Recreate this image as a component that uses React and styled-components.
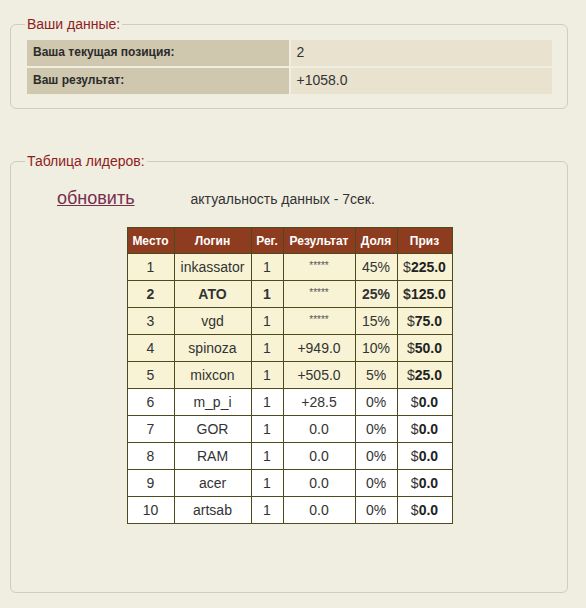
import React from "react";
import styled, { createGlobalStyle } from "styled-components";

const leaders = [
  { place: 1, login: "inkassator", reg: 1, result: "*****", share: "45%", prize: "225.0" },
  { place: 2, login: "ATO", reg: 1, result: "*****", share: "25%", prize: "125.0", me: true },
  { place: 3, login: "vgd", reg: 1, result: "*****", share: "15%", prize: "75.0" },
  { place: 4, login: "spinoza", reg: 1, result: "+949.0", share: "10%", prize: "50.0" },
  { place: 5, login: "mixcon", reg: 1, result: "+505.0", share: "5%", prize: "25.0" },
  { place: 6, login: "m_p_i", reg: 1, result: "+28.5", share: "0%", prize: "0.0" },
  { place: 7, login: "GOR", reg: 1, result: "0.0", share: "0%", prize: "0.0" },
  { place: 8, login: "RAM", reg: 1, result: "0.0", share: "0%", prize: "0.0" },
  { place: 9, login: "acer", reg: 1, result: "0.0", share: "0%", prize: "0.0" },
  { place: 10, login: "artsab", reg: 1, result: "0.0", share: "0%", prize: "0.0" },
];

const columns = [
  { title: "Место", width: 47 },
  { title: "Логин", width: 77 },
  { title: "Рег.", width: 32 },
  { title: "Результат", width: 72 },
  { title: "Доля", width: 42 },
  { title: "Приз", width: 55 },
];

const App = () => {
  return (
    <>
      <GlobalStyle />
      <Page>
        <Fieldset>
          <Legend>Ваши данные:</Legend>
          <InfoGrid>
            <InfoLabel>Ваша текущая позиция:</InfoLabel>
            <InfoValue>2</InfoValue>
            <InfoLabel>Ваш результат:</InfoLabel>
            <InfoValue>+1058.0</InfoValue>
          </InfoGrid>
        </Fieldset>

        <Fieldset $tall>
          <Legend>Таблица лидеров:</Legend>
          <Toolbar>
            <RefreshLink href="#">обновить</RefreshLink>
            <Freshness>актуальность данных - 7сек.</Freshness>
          </Toolbar>
          <Leaders>
            <thead>
              <tr>
                {columns.map((c) => (
                  <Th key={c.title} $w={c.width}>
                    {c.title}
                  </Th>
                ))}
              </tr>
            </thead>
            <tbody>
              {leaders.map((r) => (
                <Row key={r.place} $paid={r.place <= 5} $me={r.me}>
                  <Td>{r.place}</Td>
                  <Td>{r.login}</Td>
                  <Td>{r.reg}</Td>
                  <Td>{r.result === "*****" ? <Hidden>*****</Hidden> : r.result}</Td>
                  <Td>{r.share}</Td>
                  <Td>
                    ${""}
                    <Prize>{r.prize}</Prize>
                  </Td>
                </Row>
              ))}
            </tbody>
          </Leaders>
        </Fieldset>
      </Page>
    </>
  );
};

export default App;

const GlobalStyle = createGlobalStyle`
  body {
    margin: 0;
    background: #f0ede1;
    font-family: "Liberation Sans", Arial, sans-serif;
    color: #333;
  }
`;

const Page = styled.div`
  padding: 16px 0 0 10px;
  width: 558px;
`;

const Fieldset = styled.fieldset`
  margin: 0 0 ${({ $tall }) => ($tall ? "0" : "44px")};
  padding: ${({ $tall }) => ($tall ? "1px 15px 68px 16px" : "8px 15px 14px 16px")};
  border: 1px solid #cfccc2;
  border-radius: 6px;
  min-width: 0;
`;

const Legend = styled.legend`
  padding: 0 2px;
  margin-left: -2px;
  font-size: 14px;
  line-height: 16px;
  color: #8f1d1d;
`;

const InfoGrid = styled.div`
  display: grid;
  grid-template-columns: 1fr 1fr;
  gap: 2px;
`;

const InfoLabel = styled.div`
  height: 26px;
  padding: 4px 6px 0;
  box-sizing: border-box;
  background: #cfc7ae;
  font-size: 12px;
  font-weight: bold;
  line-height: 16px;
  color: #2b2b2b;
`;

const InfoValue = styled.div`
  height: 26px;
  padding: 4px 6px 0;
  box-sizing: border-box;
  background: #e8e2cf;
  font-size: 14px;
  line-height: 17px;
  color: #333;
`;

const Toolbar = styled.div`
  display: flex;
  align-items: baseline;
  gap: 56px;
  padding: 18px 0 0 30px;
`;

const RefreshLink = styled.a`
  font-size: 18px;
  line-height: 20px;
  color: #76304d;
  text-decoration: underline;
`;

const Freshness = styled.span`
  font-size: 14px;
  color: #333;
`;

const Leaders = styled.table`
  margin: 19px auto 0;
  border-collapse: collapse;
  border: 1px solid #4e4a20;
`;

const Th = styled.th`
  width: ${({ $w }) => $w}px;
  height: 26px;
  padding: 0;
  box-sizing: border-box;
  background: #8e3c1f;
  color: #fff;
  font-size: 12px;
  font-weight: bold;
  border: 1px solid #4e4a20;
`;

const Row = styled.tr`
  background: ${({ $paid }) => ($paid ? "#f7f3d4" : "#fff")};
  font-weight: ${({ $me }) => ($me ? "bold" : "normal")};
`;

const Td = styled.td`
  height: 26px;
  padding: 0;
  text-align: center;
  font-size: 14px;
  color: #333;
  border: 1px solid #4e4a20;
`;

const Hidden = styled.span`
  font-size: 10px;
  font-weight: normal;
  color: #555;
  vertical-align: 3px;
`;

const Prize = styled.b`
  color: #222;
`;
